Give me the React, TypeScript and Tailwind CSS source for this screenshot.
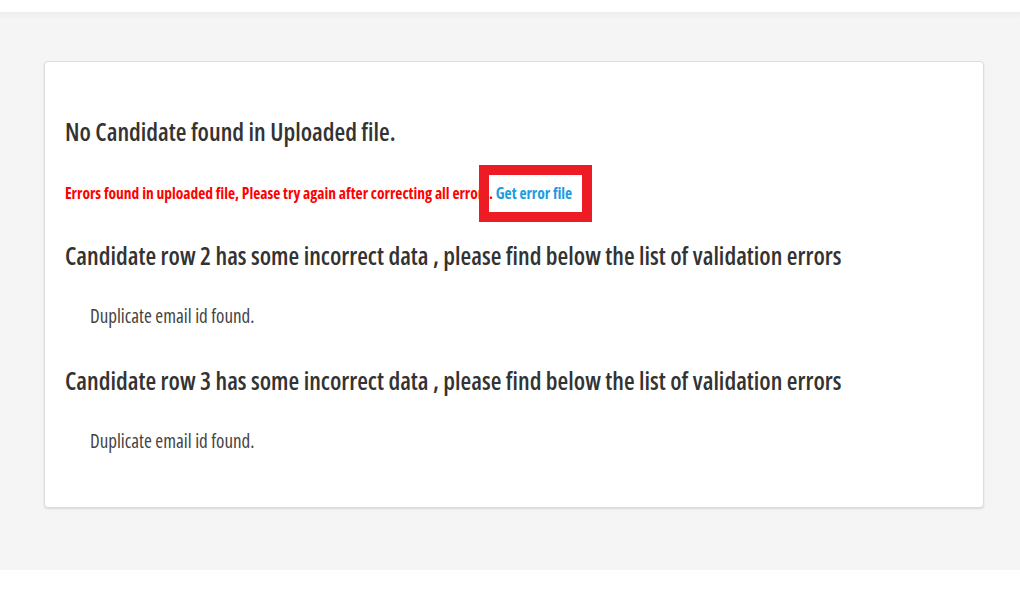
const rows = [
  { row: 2, errors: ["Duplicate email id found."] },
  { row: 3, errors: ["Duplicate email id found."] },
];

export default function App() {
  return (
    <div className="min-h-screen bg-white font-['Open_Sans',sans-serif] [font-stretch:75%]">
      <div className="h-3 bg-white" />
      <div className="bg-[linear-gradient(#ededed,#f5f5f5_8px)] pt-[49px] pb-[62px] px-11">
        <div className="bg-white border border-[#dddddd] rounded-[4px] shadow-[0_1px_2px_rgba(0,0,0,0.12)] px-5 pt-[52px] pb-[53px] w-[940px]">
          <h2 className="text-[24.5px] leading-[36px] font-semibold text-[#333333]">
            No Candidate found in Uploaded file.
          </h2>
          <div className="mt-[32px] text-[15.5px] leading-[22px] font-bold">
            <span className="text-[#ff0000]">
              Errors found in uploaded file, Please try again after correcting all errors.
            </span>{" "}
            <span className="relative">
              <a href="#" className="text-[#1b9ce2]">Get error file</a>
              <span className="absolute left-[-17px] top-[-17px] w-[113px] h-[57px] border-[10px] border-[#ed1c24]" />
            </span>
          </div>
          {rows.map((r) => (
            <div key={r.row}>
              <h3 className="mt-[34px] text-[24.5px] leading-[36px] font-semibold text-[#333333]">
                Candidate row {r.row} has some incorrect data , please find below the list of validation errors
              </h3>
              <ul className="mt-[29px] pl-[25px]">
                {r.errors.map((e, i) => (
                  <li key={i} className="text-[19px] leading-[26px] text-[#444444]">{e}</li>
                ))}
              </ul>
            </div>
          ))}
        </div>
      </div>
    </div>
  );
}
